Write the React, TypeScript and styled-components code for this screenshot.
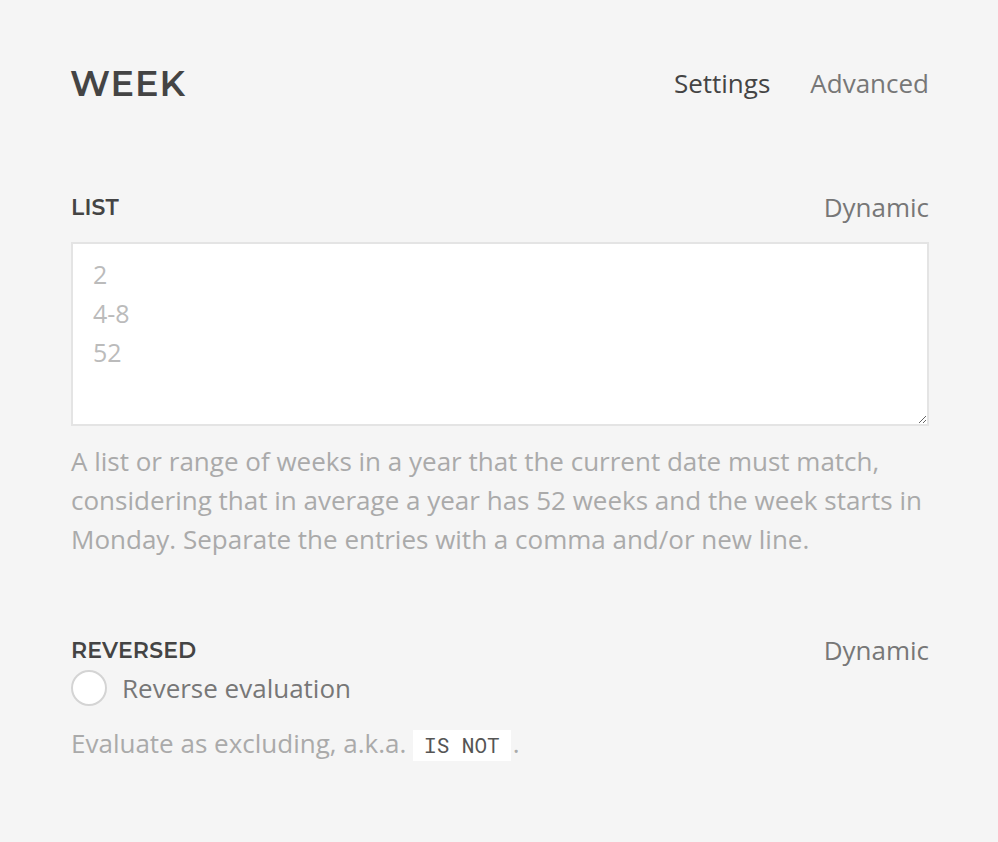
import React from "react";
import styled, { createGlobalStyle } from "styled-components";

const Global = createGlobalStyle`
  html, body { margin: 0; padding: 0; background: #f5f5f5; }
  body { font-family: "Open Sans", "Noto Sans", sans-serif; }
  * { box-sizing: border-box; }
`;

const Page = styled.div`
  width: 998px;
  min-height: 842px;
  padding: 53px 69px 0 71px;
  background: #f5f5f5;
`;

const Header = styled.header`
  display: flex;
  align-items: center;
  justify-content: space-between;
  height: 60px;
`;

const Title = styled.h1`
  margin: 0 0 0 -1px;
  font-family: "Montserrat", "Open Sans", sans-serif;
  font-weight: 600;
  font-size: 35px;
  letter-spacing: 1px;
  color: #444;
`;

const Tabs = styled.nav`
  display: flex;
  gap: 40px;
`;

const Tab = styled.span<{ $active?: boolean }>`
  font-size: 26px;
  color: ${(p) => (p.$active ? "#444" : "#777")};
`;

const Section = styled.section<{ $top: number }>`
  margin-top: ${(p) => p.$top}px;
`;

const FieldHead = styled.div`
  display: flex;
  align-items: center;
  justify-content: space-between;
  height: 30px;
`;

const Label = styled.h2`
  margin: 0;
  font-family: "Montserrat", "Open Sans", sans-serif;
  font-weight: 600;
  font-size: 22px;
  letter-spacing: 0.2px;
  color: #444;
`;

const Dynamic = styled.span`
  font-size: 26px;
  color: #777;
`;

const Area = styled.textarea`
  display: block;
  width: 100%;
  height: 184px;
  margin-top: 20px;
  padding: 11px 20px;
  border: 2px solid #e4e4e4;
  border-radius: 0;
  background: #fff;
  font-family: "Open Sans", sans-serif;
  font-size: 25px;
  font-weight: 400;
  line-height: 39px;
  color: #444;
  resize: vertical;
  outline: none;
  &::placeholder { color: #bbb; }
`;

const Help = styled.p<{ $top?: number }>`
  margin: ${(p) => p.$top ?? 16}px 0 0;
  font-size: 26px;
  font-weight: 400;
  line-height: 39px;
  color: #aaa;
`;

const CheckRow = styled.label`
  display: flex;
  align-items: center;
  gap: 15px;
  margin-top: 5px;
  font-size: 26px;
  color: #777;
`;

const Radio = styled.span`
  width: 36px;
  height: 36px;
  border-radius: 50%;
  background: #fff;
  border: 2px solid #d4d4d4;
`;

const Code = styled.code`
  display: inline-block;
  padding: 0 11px;
  margin: 0 2px 0 0;
  background: #fff;
  font-family: "Roboto Mono", "DejaVu Sans Mono", monospace;
  font-size: 21px;
  font-weight: 400;
  line-height: 31px;
  color: #555;
`;

export default function App() {
  return (
    <>
      <Global />
      <Page>
        <Header>
          <Title>WEEK</Title>
          <Tabs>
            <Tab $active>Settings</Tab>
            <Tab>Advanced</Tab>
          </Tabs>
        </Header>
        <Section $top={79}>
          <FieldHead>
            <Label>LIST</Label>
            <Dynamic>Dynamic</Dynamic>
          </FieldHead>
          <Area placeholder={"2\n4-8\n52"} />
          <Help>
            A list or range of weeks in a year that the current date must match,
            considering that in average a year has 52 weeks and the week starts in
            Monday. Separate the entries with a comma and/or new line.
          </Help>
        </Section>
        <Section $top={76}>
          <FieldHead>
            <Label>REVERSED</Label>
            <Dynamic>Dynamic</Dynamic>
          </FieldHead>
          <CheckRow>
            <Radio />
            Reverse evaluation
          </CheckRow>
          <Help $top={18}>
            Evaluate as excluding, a.k.a. <Code>IS NOT</Code>.
          </Help>
        </Section>
      </Page>
    </>
  );
}
